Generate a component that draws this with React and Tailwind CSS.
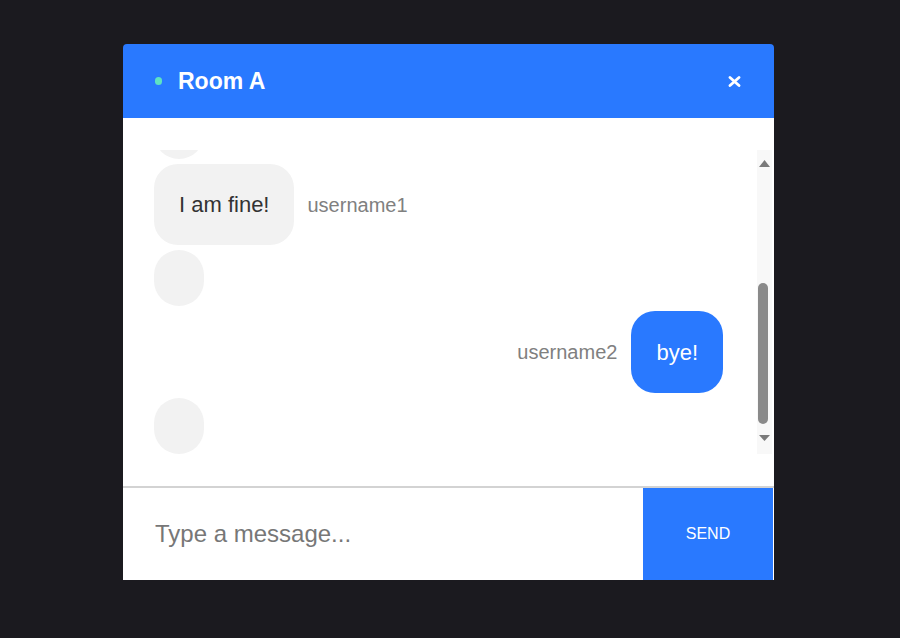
import { useLayoutEffect, useRef } from "react";

const messages = [
  { id: 1, text: "", user: "", mine: false },
  { id: 2, text: "", user: "", mine: false },
  { id: 3, text: "", user: "", mine: false },
  { id: 4, text: "I am fine!", user: "username1", mine: false },
  { id: 5, text: "", user: "", mine: false },
  { id: 6, text: "bye!", user: "username2", mine: true },
  { id: 7, text: "", user: "", mine: false },
];

const Message = ({ msg }) => {
  if (!msg.text) {
    return <div className="h-[56px] w-[50px] rounded-[25px] bg-[#f2f2f2]" />;
  }

  if (msg.mine) {
    return (
      <div className="flex items-center justify-end gap-[14px]">
        <span className="text-[20px] text-[#808080]">{msg.user}</span>
        <div className="flex h-[82px] items-center rounded-[24px] bg-[#2979ff] px-[25px] text-[22px] text-white">
          {msg.text}
        </div>
      </div>
    );
  }

  return (
    <div className="flex items-center gap-[13px]">
      <div className="flex h-[81px] items-center rounded-[24px] bg-[#f2f2f2] px-[25px] text-[22px] text-[#333333]">
        {msg.text}
      </div>
      <span className="text-[20px] text-[#808080]">{msg.user}</span>
    </div>
  );
};

const ScrollBar = () => (
  <div className="flex w-[15px] shrink-0 flex-col items-center bg-[#f8f8f8] pt-[10px]">
    <svg width="11" height="7" viewBox="0 0 11 7">
      <path d="M5.5 0 L11 7 L0 7 Z" fill="#7a7a7a" />
    </svg>
    <div className="h-[116px]" />
    <div className="ml-[1px] h-[141px] w-[10px] self-start rounded-full bg-[#8a8a8a]" />
    <div className="h-[11px]" />
    <svg width="11" height="6" viewBox="0 0 11 6">
      <path d="M0 0 L11 0 L5.5 6 Z" fill="#7a7a7a" />
    </svg>
  </div>
);

export default function App() {
  const listRef = useRef(null);

  useLayoutEffect(() => {
    if (listRef.current) listRef.current.scrollTop = 169;
  }, []);

  return (
    <div
      className="min-h-[638px] bg-[#1b1a1f] pt-[44px]"
      style={{ fontFamily: '"Liberation Sans", Arial, sans-serif' }}
    >
      <div className="ml-[123px] w-[651px]">
        <header className="flex h-[74px] items-center justify-between rounded-t-[4px] bg-[#2979ff] pl-[32px] pr-[33px]">
          <div className="flex items-center gap-[16px]">
            <span className="h-[8px] w-[7px] rounded-full bg-[#5ee3c3]" />
            <h1 className="text-[23px] font-bold text-white">Room A</h1>
          </div>
          <button className="flex h-[20px] w-[14px] items-center justify-center">
            <svg width="13" height="11" viewBox="0 0 13 11">
              <path d="M2 1.5 L11 9.5 M11 1.5 L2 9.5" stroke="#fff" strokeWidth="2.8" strokeLinecap="round" />
            </svg>
          </button>
        </header>

        <div className="bg-white py-[32px] pr-[2px]">
          <div className="flex h-[304px]">
            <div
              ref={listRef}
              className="flex flex-1 flex-col gap-[5px] overflow-hidden pb-[24px] pl-[31px] pr-[34px]"
            >
              {messages.map((m) => (
                <div key={m.id} className="shrink-0">
                  <Message msg={m} />
                </div>
              ))}
            </div>
            <ScrollBar />
          </div>
        </div>

        <div className="flex h-[94px] border-t-2 border-[#d3d3d3] bg-white">
          <input
            className="flex-1 bg-white pl-[32px] text-[24px] text-[#333] outline-none placeholder:text-[#777777]"
            placeholder="Type a message..."
          />
          <button className="mr-[1px] w-[130px] bg-[#2979ff] text-[16px] text-white">SEND</button>
        </div>
      </div>
    </div>
  );
}
